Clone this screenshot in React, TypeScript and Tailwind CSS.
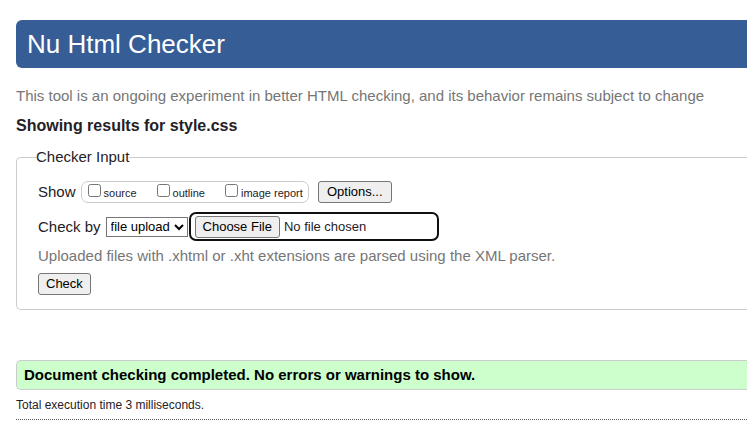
const buttonStyle =
  'h-[22px] rounded-[3px] border border-[#767676] bg-[#efefef] px-[7px] text-[13px] leading-[20px] text-black';

const reports = ['source', 'outline', 'image report'];

export default function App() {
  return (
    <main className="min-h-screen overflow-hidden bg-white pt-5 pl-4 font-['Liberation_Sans',Arial,sans-serif] text-[15px] leading-5 text-[#1f2126]">
      <h1 className="rounded-l-md bg-[#365d95] px-[11px] py-2 text-[26px] leading-8 text-white">
        Nu Html Checker
      </h1>
      <p className="mt-[18px] text-[#767676]">
        This tool is an ongoing experiment in better HTML checking, and its behavior remains subject to change
      </p>
      <h2 className="mt-[10px] text-base leading-5 font-bold">Showing results for style.css</h2>

      <form onSubmit={(event) => event.preventDefault()}>
        <fieldset className="mt-[11px] rounded-l-[5px] border border-r-0 border-[#ccc] px-[21px] pb-[14px]">
          <legend className="-ml-[2px]">Checker Input</legend>
          <div className="mt-[14px] flex items-center">
            <span>Show</span>
            <div className="ml-[5px] flex h-[22px] items-center gap-5 rounded-[7px] border border-[#ccc] pr-[5px] pl-[6px] text-[11px] leading-4">
              {reports.map((report) => (
                <label key={report} className="flex items-end gap-[3px] whitespace-nowrap">
                  <input type="checkbox" className="mb-1 size-[13px]" />
                  {report}
                </label>
              ))}
            </div>
            <button type="button" className={`${buttonStyle} ml-[9px] min-w-[74px]`}>
              Options...
            </button>
          </div>
          <div className="mt-[9px] flex items-center">
            <label htmlFor="method">Check by</label>
            <select
              id="method"
              className="ml-[5px] h-5 w-[82px] border border-[#767676] bg-white text-[13px] leading-[18px] text-black"
            >
              <option>file upload</option>
              <option>text input</option>
              <option>address</option>
            </select>
            <input
              type="file"
              aria-label="File to check"
              className="ml-[1px] h-[29px] w-[250px] rounded-[7px] border-2 border-[#101010] p-[2px] pl-1 text-[13px] leading-[20px] file:mr-1 file:h-[22px] file:rounded-[3px] file:border file:border-solid file:border-[#767676] file:bg-[#efefef] file:px-[7px] file:text-black"
            />
          </div>
          <p className="mt-[5px] text-[#767676]">
            Uploaded files with .xhtml or .xht extensions are parsed using the XML parser.
          </p>
          <button type="submit" className={`${buttonStyle} mt-[7px] block`}>
            Check
          </button>
        </fieldset>
      </form>

      <p className="mt-[50px] rounded-l-[5px] border border-r-0 border-[#ccc] bg-[#cfc] px-[7px] py-[6px] text-[15px] leading-4 font-bold text-black">
        Document checking completed. No errors or warnings to show.
      </p>
      <p className="border-b border-dotted border-[#555] pt-[7px] pb-[6px] text-xs leading-4">
        Total execution time 3 milliseconds.
      </p>
    </main>
  );
}
